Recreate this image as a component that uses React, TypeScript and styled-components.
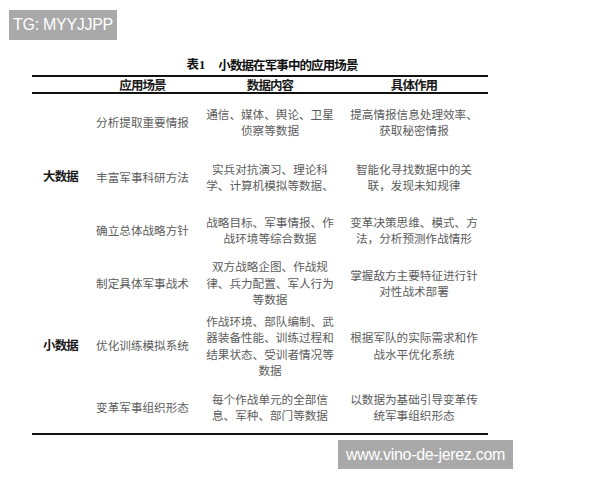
import React from 'react';
import styled, { createGlobalStyle } from 'styled-components';

const GlobalStyle = createGlobalStyle`
  html, body {
    margin: 0;
    padding: 0;
    background: #fff;
  }
`;

const Page = styled.div`
  position: relative;
  width: 600px;
  height: 480px;
  overflow: hidden;
  background: #fff;
  font-family: "Noto Sans CJK SC", "Liberation Sans", sans-serif;
`;

const Watermark = styled.div<{ $corner: 'top' | 'bottom' }>`
  position: absolute;
  ${p => p.$corner === 'top'
    ? 'left: 9px; top: 10px; width: 108px; height: 30px;'
    : 'left: 338px; top: 440px; width: 175px; height: 29px;'}
  display: flex;
  align-items: center;
  justify-content: center;
  background: #a9a9a9;
  color: #fff;
  font-size: 16px;
  font-family: "Liberation Sans", Arial, sans-serif;
  letter-spacing: -0.3px;
`;

const Figure = styled.div`
  width: 456px;
  margin-left: 32px;
  padding-top: 57px;
`;

const Title = styled.div`
  display: flex;
  justify-content: center;
  padding-left: 24px;
  height: 17px;
  font-size: 12.5px;
  letter-spacing: -0.9px;
  line-height: 16px;
  font-weight: 700;
  color: #111;
`;

const TitleNum = styled.span`
  font-family: "Liberation Serif", "Noto Sans CJK SC", serif;
  letter-spacing: 0;
  margin-right: 13px;
`;

const Table = styled.div`
  margin-top: 1px;
  display: grid;
  grid-template-columns: 53px 115px 140px 148px;
  grid-template-rows: 17px 56px 54px 52px 54px 71px 52px;
  border-top: 2px solid #111;
  border-bottom: 2px solid #111;
`;

const HeadCell = styled.div`
  display: flex;
  align-items: center;
  justify-content: center;
  font-size: 12.5px;
  letter-spacing: -0.9px;
  font-weight: 700;
  color: #1a1a1a;
  border-bottom: 2px solid #111;
`;

const GroupCell = styled.div<{ $row: number }>`
  grid-column: 1;
  grid-row: ${p => p.$row} / span 3;
  display: flex;
  align-items: center;
  justify-content: center;
  padding-left: 4px;
  font-size: 12.5px;
  letter-spacing: -0.9px;
  font-weight: 700;
  color: #1a1a1a;
`;

const Cell = styled.div<{ $col: number }>`
  grid-column: ${p => p.$col};
  display: flex;
  flex-direction: column;
  align-items: center;
  justify-content: center;
  font-size: 11.6px;
  line-height: 16.5px;
  color: #5c5c5c;
  text-align: center;
  white-space: nowrap;
`;

type Row = {
  scene: string;
  content: string[];
  effect: string[];
};

const rows: Row[] = [
  { scene: '分析提取重要情报', content: ['通信、媒体、舆论、卫星', '侦察等数据'], effect: ['提高情报信息处理效率、', '获取秘密情报'] },
  { scene: '丰富军事科研方法', content: ['实兵对抗演习、理论科', '学、计算机模拟等数据、'], effect: ['智能化寻找数据中的关', '联，发现未知规律'] },
  { scene: '确立总体战略方针', content: ['战略目标、军事情报、作', '战环境等综合数据'], effect: ['变革决策思维、模式、方', '法，分析预测作战情形'] },
  { scene: '制定具体军事战术', content: ['双方战略企图、作战规', '律、兵力配置、军人行为', '等数据'], effect: ['掌握敌方主要特征进行针', '对性战术部署'] },
  { scene: '优化训练模拟系统', content: ['作战环境、部队编制、武', '器装备性能、训练过程和', '结果状态、受训者情况等', '数据'], effect: ['根据军队的实际需求和作', '战水平优化系统'] },
  { scene: '变革军事组织形态', content: ['每个作战单元的全部信', '息、军种、部门等数据'], effect: ['以数据为基础引导变革传', '统军事组织形态'] },
];

export default function App() {
  return (
    <Page>
      <GlobalStyle />
      <Watermark $corner="top">TG: MYYJJPP</Watermark>
      <Figure>
        <Title>
          <TitleNum>表1</TitleNum>
          <span>小数据在军事中的应用场景</span>
        </Title>
        <Table>
          <HeadCell />
          <HeadCell>应用场景</HeadCell>
          <HeadCell>数据内容</HeadCell>
          <HeadCell>具体作用</HeadCell>
          <GroupCell $row={2}>大数据</GroupCell>
          <GroupCell $row={5}>小数据</GroupCell>
          {rows.map(r => (
            <React.Fragment key={r.scene}>
              <Cell $col={2}>{r.scene}</Cell>
              <Cell $col={3}>
                {r.content.map(l => <span key={l}>{l}</span>)}
              </Cell>
              <Cell $col={4}>
                {r.effect.map(l => <span key={l}>{l}</span>)}
              </Cell>
            </React.Fragment>
          ))}
        </Table>
      </Figure>
      <Watermark $corner="bottom">www.vino-de-jerez.com</Watermark>
    </Page>
  );
}
